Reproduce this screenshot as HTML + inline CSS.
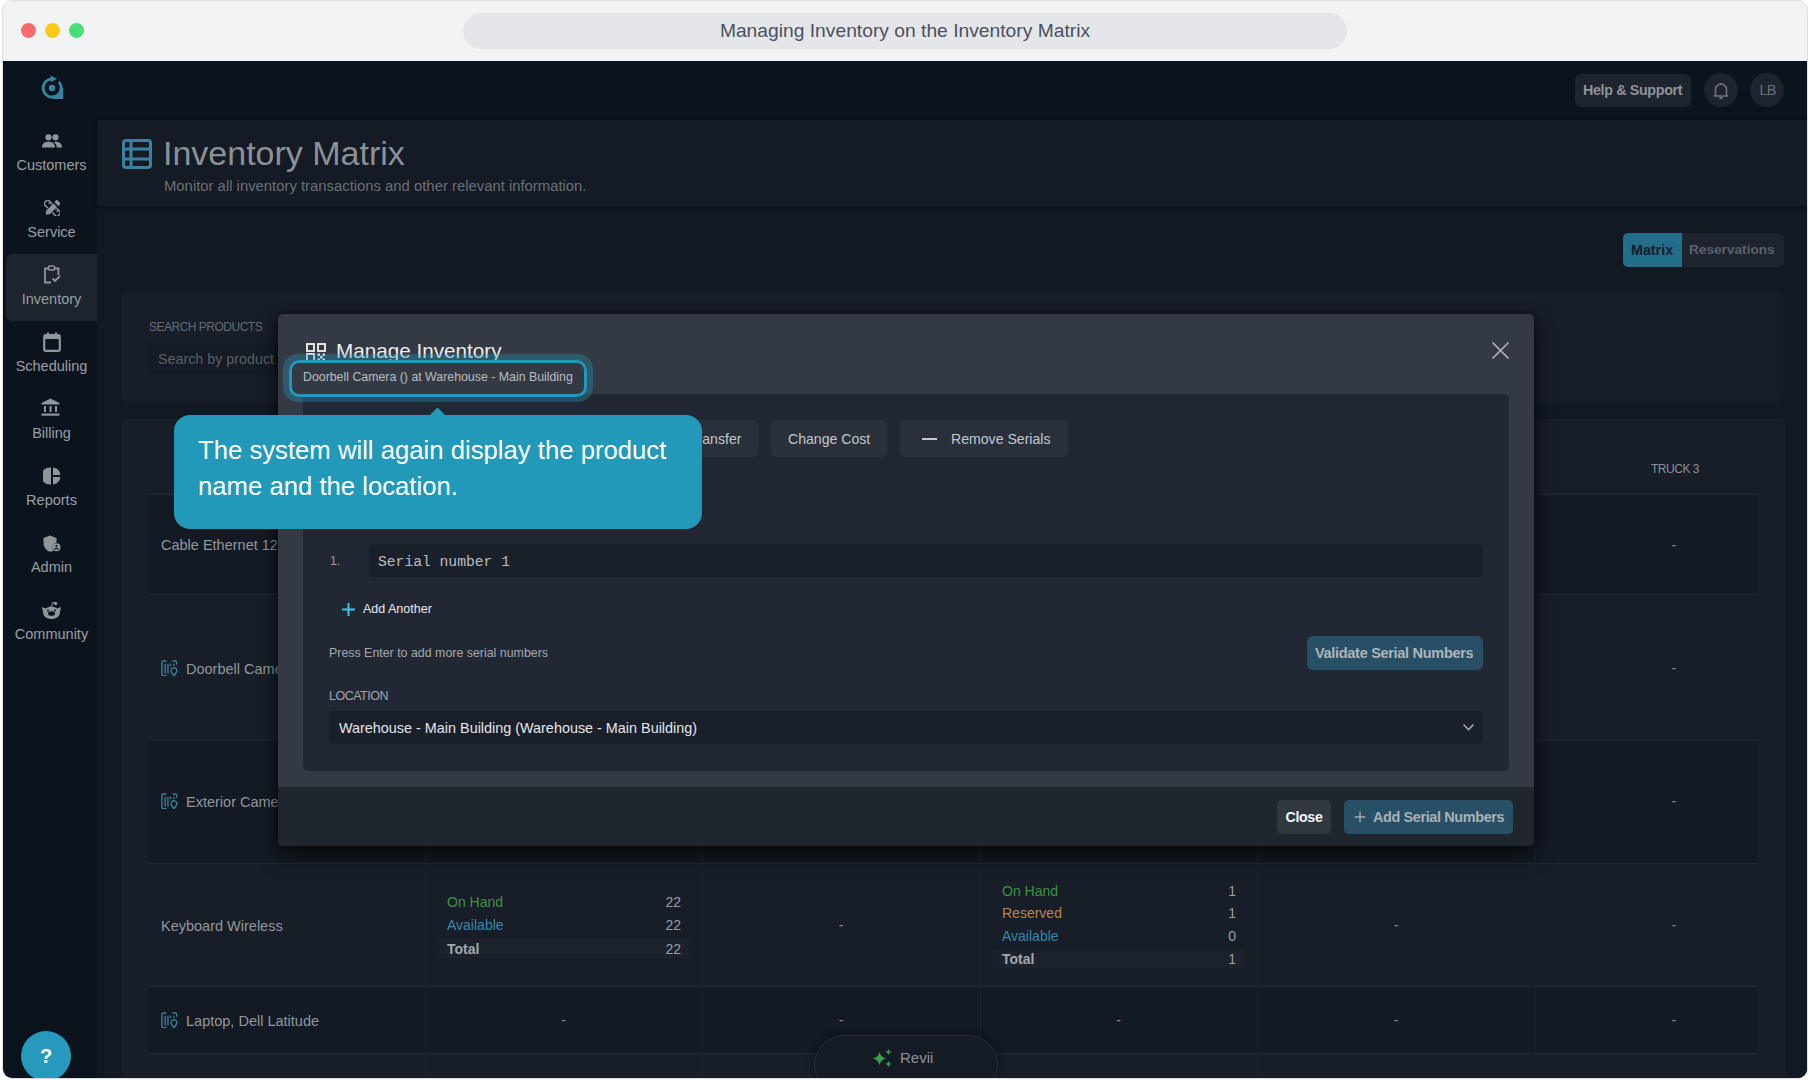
<!DOCTYPE html>
<html><head><meta charset="utf-8">
<style>
*{box-sizing:border-box;margin:0;padding:0}
html,body{width:1810px;height:1080px;overflow:hidden;background:#fff;font-family:"Liberation Sans",sans-serif}
.a{position:absolute}
.t{position:absolute;white-space:nowrap;line-height:1}
#frame{left:2px;top:0;width:1806px;height:1079px;border:1px solid #dcdfe3;border-radius:10px;background:#f2f3f5}
#dark{left:3px;top:61px;width:1804px;height:1017px;overflow:hidden;border-radius:0 0 9px 9px;background:#0b141d}
#pg{left:-3px;top:-61px;width:1810px;height:1080px}
.dot{width:15px;height:15px;border-radius:50%}
</style></head><body>
<div id="frame" class="a"></div>
<div class="a dot" style="left:21px;top:23px;background:#f76b6d"></div>
<div class="a dot" style="left:45px;top:23px;background:#fbc91a"></div>
<div class="a dot" style="left:69px;top:23px;background:#4ade7a"></div>
<div class="a" style="left:463px;top:13px;width:884px;height:36px;border-radius:18px;background:#e4e6ea"></div>
<div class="t" style="left:463px;width:884px;top:21px;text-align:center;font-size:19.25px;color:#4a525e">Managing Inventory on the Inventory Matrix</div>

<div id="dark" class="a"><div id="pg" class="a">
  <!-- main bg -->
  <div class="a" style="left:97px;top:120px;width:1713px;height:960px;background:#111922"></div>
  <!-- header card -->
  <div class="a" style="left:97px;top:120px;width:1713px;height:86px;background:#141b24;box-shadow:0 1px 5px rgba(0,0,0,.45)"></div>

  <!-- sidebar active -->
  <div class="a" style="left:6px;top:254px;width:91px;height:67px;background:#1d242e;border-radius:6px 0 0 6px"></div>


  <!-- logo -->
  <svg class="a" style="left:40px;top:74px" width="26" height="28" viewBox="0 0 26 28">
    <rect x="12.2" y="14" width="11" height="11" fill="#3a82a0"/>
    <circle cx="12.2" cy="14" r="7.6" fill="#0c141d"/>
    <circle cx="12.2" cy="14" r="9.1" fill="none" stroke="#3a82a0" stroke-width="2.9" stroke-dasharray="44.6 5.5 7.1 0"/>
    <path d="M10.5 1.6 L17 4.8 L10.8 8.2 Z" fill="#3a82a0"/>
    <circle cx="12" cy="14" r="3.3" fill="#3a82a0"/>
  </svg>
  <!-- customers -->
  <svg class="a" style="left:42px;top:134px" width="20" height="14" viewBox="0 0 20 14">
    <circle cx="6.5" cy="3.3" r="3.1" fill="#8f959b"/><circle cx="13.5" cy="3.3" r="3.1" fill="#8f959b"/>
    <path d="M0 13.5 C0 9 3 7.8 6.5 7.8 C10 7.8 13 9 13 13.5 Z" fill="#8f959b"/>
    <path d="M11.5 8.2 C12.2 8 12.8 7.8 13.5 7.8 C17 7.8 20 9 20 13.5 L14.8 13.5 C14.8 11 13.8 9.3 11.5 8.2 Z" fill="#8f959b"/>
  </svg>
  <!-- service -->
  <svg class="a" style="left:43.5px;top:199.5px" width="16.5" height="16.5" viewBox="0.3 0.3 17.4 17.4">
    <g transform="translate(9,9) rotate(45)">
      <rect x="-10" y="-3.1" width="20" height="6.2" rx="1.6" fill="none" stroke="#8f959b" stroke-width="1.6"/>
      <path d="M-6 -3 V-0.5 M-3 -3 V-1 M3 -3 V-1 M6 -3 V-0.5" stroke="#8f959b" stroke-width="1.2"/>
    </g>
    <g transform="translate(9,9) rotate(-45)">
      <path d="M-10.5 0 L-6.5 -3 H4.8 V3 H-6.5 Z" fill="#8f959b" stroke="#0b141d" stroke-width="0.8"/>
      <rect x="6.2" y="-3" width="3.6" height="6" fill="#8f959b"/>
    </g>
  </svg>
  <!-- inventory -->
  <svg class="a" style="left:43px;top:265px" width="18" height="19" viewBox="0 0 18 19">
    <path d="M5 3.5 L2 3.5 L2 17.5 L8 17.5" fill="none" stroke="#8f959b" stroke-width="1.8"/>
    <path d="M12 3.5 L15.5 3.5 L15.5 10" fill="none" stroke="#8f959b" stroke-width="1.8"/>
    <rect x="5.5" y="1" width="6" height="4" rx="1" fill="none" stroke="#8f959b" stroke-width="1.6"/>
    <path d="M9.5 13.5 L12 16 L17 11" fill="none" stroke="#8f959b" stroke-width="1.8"/>
  </svg>
  <!-- scheduling -->
  <svg class="a" style="left:43px;top:332px" width="18" height="20" viewBox="0 0 18 20">
    <rect x="1.2" y="3.2" width="15.6" height="15.6" rx="1.5" fill="none" stroke="#8f959b" stroke-width="2.2"/>
    <rect x="1" y="3" width="16" height="4" fill="#8f959b"/>
    <rect x="4" y="0.5" width="2" height="4" fill="#8f959b"/><rect x="12" y="0.5" width="2" height="4" fill="#8f959b"/>
  </svg>
  <!-- billing -->
  <svg class="a" style="left:41px;top:398px" width="19" height="19" viewBox="0 0 19 19">
    <path d="M9.5 0.5 L18.5 5 L18.5 6.5 L0.5 6.5 L0.5 5 Z" fill="#8f959b"/>
    <rect x="3" y="8" width="2" height="6" fill="#8f959b"/><rect x="8.5" y="8" width="2" height="6" fill="#8f959b"/><rect x="14" y="8" width="2" height="6" fill="#8f959b"/>
    <rect x="0.5" y="15.5" width="18" height="2.2" fill="#8f959b"/>
  </svg>
  <!-- reports -->
  <svg class="a" style="left:43px;top:467px" width="18" height="18" viewBox="0 0 18 18">
    <path d="M8 0.6 A8.5 8.5 0 1 0 8 17.4 Z" fill="#8f959b"/>
    <path d="M10 0.6 A8.5 8.5 0 0 1 17.4 8 L10 8 Z" fill="#8f959b"/>
    <path d="M10 10 L17.4 10 A8.5 8.5 0 0 1 10 17.4 Z" fill="#8f959b"/>
  </svg>
  <!-- admin -->
  <svg class="a" style="left:43px;top:535px" width="18" height="17" viewBox="0 0 18 17">
    <path d="M7 0.5 L13.5 3 L13.5 7.5 C11 8 9.5 10 9.5 12.5 C9.5 14 10 15 10.8 15.8 C9.8 16.3 8.5 16.6 7 16.8 C3 15.5 0.5 12 0.5 7.5 L0.5 3 Z" fill="#8f959b"/>
    <circle cx="13.5" cy="12.3" r="4" fill="#8f959b"/>
    <circle cx="13.5" cy="11" r="1.1" fill="#0c141d"/><path d="M11.5 14.5 C12 13 15 13 15.5 14.5" stroke="#0c141d" stroke-width="1.2" fill="none"/>
  </svg>
  <!-- community -->
  <svg class="a" style="left:41px;top:601px" width="21" height="19" viewBox="0 0 21 19">
    <path d="M1 6 L5 7.5 C7 6 9 5.5 10.5 5.5 C12 5.5 14 6 16 7.5 L20 6 L19 11 C19 15.5 15 18 10.5 18 C6 18 2 15.5 2 11 Z" fill="#8f959b"/>
    <circle cx="14.5" cy="2.5" r="1.8" fill="#8f959b"/><path d="M10.5 5.5 L11.5 1.5 L14.5 2.5" stroke="#8f959b" stroke-width="1" fill="none"/>
    <ellipse cx="10.5" cy="12.5" rx="3.5" ry="2.3" fill="#0c141d"/>
    <circle cx="7" cy="9.5" r="1" fill="#0c141d"/><circle cx="14" cy="9.5" r="1" fill="#0c141d"/>
  </svg>
  <div class="t" style="left:6px;width:91px;text-align:center;top:158.4px;font-size:14.5px;color:#9a9fa5">Customers</div>
  <div class="t" style="left:6px;width:91px;text-align:center;top:225.4px;font-size:14.5px;color:#9a9fa5">Service</div>
  <div class="t" style="left:6px;width:91px;text-align:center;top:292.4px;font-size:14.5px;color:#9a9fa5">Inventory</div>
  <div class="t" style="left:6px;width:91px;text-align:center;top:359.4px;font-size:14.5px;color:#9a9fa5">Scheduling</div>
  <div class="t" style="left:6px;width:91px;text-align:center;top:426.4px;font-size:14.5px;color:#9a9fa5">Billing</div>
  <div class="t" style="left:6px;width:91px;text-align:center;top:493.4px;font-size:14.5px;color:#9a9fa5">Reports</div>
  <div class="t" style="left:6px;width:91px;text-align:center;top:560.4px;font-size:14.5px;color:#9a9fa5">Admin</div>
  <div class="t" style="left:6px;width:91px;text-align:center;top:627.4px;font-size:14.5px;color:#9a9fa5">Community</div>

  <!-- top bar buttons -->
  <div class="a" style="left:1575px;top:74px;width:116px;height:33px;border-radius:6px;background:#1d242d"></div>
  <div class="t" style="left:1583px;top:82.9px;font-size:14.3px;letter-spacing:-0.35px;font-weight:bold;color:#8e9399">Help &amp; Support</div>
  <div class="a" style="left:1704px;top:73px;width:34px;height:34px;border-radius:50%;background:#1d242d"></div>
  <div class="a" style="left:1750px;top:73px;width:34px;height:34px;border-radius:50%;background:#1d242d"></div>
  <div class="t" style="left:1759.5px;top:82.5px;font-size:14.6px;letter-spacing:-0.9px;color:#6b7178">LB</div>

  <!-- header -->
  <div class="t" style="left:163px;top:136px;font-size:34px;color:#8b9197">Inventory Matrix</div>
  <div class="t" style="left:164px;top:179px;font-size:14.85px;color:#6a7077">Monitor all inventory transactions and other relevant information.</div>

  <!-- toggle -->
  <div class="a" style="left:1623px;top:233px;width:161px;height:34px;border-radius:5px;background:#1d242e;overflow:hidden">
    <div class="a" style="left:0;top:0;width:59px;height:34px;background:#226d89"></div>
  </div>
  <div class="t" style="left:1631px;top:243px;font-size:14.3px;font-weight:bold;color:#172029">Matrix</div>
  <div class="t" style="left:1689px;top:243px;font-size:13.65px;font-weight:bold;color:#5b6169">Reservations</div>

  <!-- search card -->
  <div class="a" style="left:122px;top:292px;width:1661px;height:110px;border-radius:6px;background:#171e28"></div>
  <div class="t" style="left:149px;top:321px;font-size:12px;letter-spacing:-0.5px;color:#656b72">SEARCH PRODUCTS</div>
  <div class="a" style="left:148px;top:342px;width:200px;height:33px;border-radius:4px;background:#141b24"></div>
  <div class="t" style="left:158px;top:352px;font-size:14.3px;color:#5a6067">Search by product</div>

  <!-- table card -->
  <div class="a" style="left:122px;top:419px;width:1664px;height:680px;border-radius:6px;background:#171e28"></div>
  <div class="a" style="left:148px;top:419px;width:1610px;height:700px;overflow:hidden">
    <div class="a" style="left:0;top:75px;width:1610px;height:100px;background:#131a23;border-top:1px solid #202832"></div>
    <div class="a" style="left:0;top:175px;width:1610px;height:146px;background:transparent;border-top:1px solid #202832"></div>
    <div class="a" style="left:0;top:321px;width:1610px;height:123px;background:#131a23;border-top:1px solid #202832"></div>
    <div class="a" style="left:0;top:444px;width:1610px;height:123px;background:transparent;border-top:1px solid #202832"></div>
    <div class="a" style="left:0;top:567px;width:1610px;height:67px;background:#131a23;border-top:1px solid #202832"></div>
    <div class="a" style="left:0;top:634px;width:1610px;height:67px;background:transparent;border-top:1px solid #202832"></div>
    <div class="a" style="left:277px;top:75px;width:1px;height:700px;background:#1c232c"></div>
    <div class="a" style="left:554px;top:75px;width:1px;height:700px;background:#1c232c"></div>
    <div class="a" style="left:832px;top:75px;width:1px;height:700px;background:#1c232c"></div>
    <div class="a" style="left:1109px;top:75px;width:1px;height:700px;background:#1c232c"></div>
    <div class="a" style="left:1387px;top:75px;width:1px;height:700px;background:#1c232c"></div>
  </div>
  <div class="t" style="left:161px;top:538.2px;font-size:14.5px;color:#92979d">Cable Ethernet 12ft</div>
  <svg class="a" style="left:160.5px;top:659.5px" width="17.6" height="16.7" viewBox="0 0 19 18"><g fill="none" stroke="#3c7f99" stroke-width="1.5" stroke-linecap="round"><path d="M5.5 1 L3 1 Q1 1 1 3 L1 15 Q1 17 3 17 L5.5 17"/><path d="M13 1 L15 1 Q17 1 17 3 L17 4.5"/><path d="M4.5 4.5 V14 M7.5 4.5 V14 M10.2 4.5 V6 M14 4.5 V6"/><path d="M14 17.2 L11.3 13 A3.1 3.1 0 1 1 16.7 13 Z"/></g></svg>
  <div class="t" style="left:186px;top:661.5px;font-size:14.5px;color:#92979d">Doorbell Camera</div>
  <svg class="a" style="left:160.5px;top:792.5px" width="17.6" height="16.7" viewBox="0 0 19 18"><g fill="none" stroke="#3c7f99" stroke-width="1.5" stroke-linecap="round"><path d="M5.5 1 L3 1 Q1 1 1 3 L1 15 Q1 17 3 17 L5.5 17"/><path d="M13 1 L15 1 Q17 1 17 3 L17 4.5"/><path d="M4.5 4.5 V14 M7.5 4.5 V14 M10.2 4.5 V6 M14 4.5 V6"/><path d="M14 17.2 L11.3 13 A3.1 3.1 0 1 1 16.7 13 Z"/></g></svg>
  <div class="t" style="left:186px;top:794.5px;font-size:14.5px;color:#92979d">Exterior Camera</div>
  <div class="t" style="left:161px;top:918.5px;font-size:14.5px;color:#92979d">Keyboard Wireless</div>
  <svg class="a" style="left:160.5px;top:1011.5px" width="17.6" height="16.7" viewBox="0 0 19 18"><g fill="none" stroke="#3c7f99" stroke-width="1.5" stroke-linecap="round"><path d="M5.5 1 L3 1 Q1 1 1 3 L1 15 Q1 17 3 17 L5.5 17"/><path d="M13 1 L15 1 Q17 1 17 3 L17 4.5"/><path d="M4.5 4.5 V14 M7.5 4.5 V14 M10.2 4.5 V6 M14 4.5 V6"/><path d="M14 17.2 L11.3 13 A3.1 3.1 0 1 1 16.7 13 Z"/></g></svg>
  <div class="t" style="left:186px;top:1013.5px;font-size:14.5px;color:#92979d">Laptop, Dell Latitude</div>
  <div class="t" style="left:1654px;width:40px;text-align:center;top:538.1px;font-size:14px;color:#8a9096">-</div>
  <div class="t" style="left:1654px;width:40px;text-align:center;top:661.1px;font-size:14px;color:#8a9096">-</div>
  <div class="t" style="left:1654px;width:40px;text-align:center;top:794.1px;font-size:14px;color:#8a9096">-</div>
  <div class="t" style="left:821px;width:40px;text-align:center;top:918.1px;font-size:14px;color:#8a9096">-</div>
  <div class="t" style="left:1376px;width:40px;text-align:center;top:918.1px;font-size:14px;color:#8a9096">-</div>
  <div class="t" style="left:1654px;width:40px;text-align:center;top:918.1px;font-size:14px;color:#8a9096">-</div>
  <div class="t" style="left:543.5px;width:40px;text-align:center;top:1013.1px;font-size:14px;color:#8a9096">-</div>
  <div class="t" style="left:821px;width:40px;text-align:center;top:1013.1px;font-size:14px;color:#8a9096">-</div>
  <div class="t" style="left:1098.5px;width:40px;text-align:center;top:1013.1px;font-size:14px;color:#8a9096">-</div>
  <div class="t" style="left:1376px;width:40px;text-align:center;top:1013.1px;font-size:14px;color:#8a9096">-</div>
  <div class="t" style="left:1654px;width:40px;text-align:center;top:1013.1px;font-size:14px;color:#8a9096">-</div>
  <div class="t" style="left:1600px;width:150px;text-align:center;top:462.8px;font-size:12px;letter-spacing:-0.45px;color:#8a9096">TRUCK 3</div>
  <div class="a" style="left:439px;top:939px;width:250px;height:19px;background:#1b222b"></div>
  <div class="t" style="left:447px;top:895.1px;font-size:14px;color:#3d9443">On Hand</div>
  <div class="t" style="left:621px;width:60px;text-align:right;top:895.1px;font-size:14px;color:#9a9fa5">22</div>
  <div class="t" style="left:447px;top:917.6px;font-size:14px;color:#3787ad">Available</div>
  <div class="t" style="left:621px;width:60px;text-align:right;top:917.6px;font-size:14px;color:#9a9fa5">22</div>
  <div class="t" style="left:447px;top:941.5px;font-size:14px;font-weight:bold;color:#a3a8ad">Total</div>
  <div class="t" style="left:621px;width:60px;text-align:right;top:941.5px;font-size:14px;color:#9a9fa5">22</div>
  <div class="a" style="left:993px;top:950px;width:251px;height:18px;background:#1b222b"></div>
  <div class="t" style="left:1002px;top:883.9px;font-size:14px;color:#3d9443">On Hand</div>
  <div class="t" style="left:1176px;width:60px;text-align:right;top:883.9px;font-size:14px;color:#9a9fa5">1</div>
  <div class="t" style="left:1002px;top:906.1px;font-size:14px;color:#b98550">Reserved</div>
  <div class="t" style="left:1176px;width:60px;text-align:right;top:906.1px;font-size:14px;color:#9a9fa5">1</div>
  <div class="t" style="left:1002px;top:928.9px;font-size:14px;color:#3787ad">Available</div>
  <div class="t" style="left:1176px;width:60px;text-align:right;top:928.9px;font-size:14px;color:#9a9fa5">0</div>
  <div class="t" style="left:1002px;top:952.4px;font-size:14px;font-weight:bold;color:#a3a8ad">Total</div>
  <div class="t" style="left:1176px;width:60px;text-align:right;top:952.4px;font-size:14px;color:#9a9fa5">1</div>

  <!-- header icons -->
  <svg class="a" style="left:121px;top:138px" width="32" height="32" viewBox="0 0 32 32">
    <rect x="2.5" y="2.5" width="27" height="27" rx="2.5" fill="none" stroke="#3a82a0" stroke-width="3"/>
    <path d="M10 3 V29 M3 11 H29 M3 21 H29" stroke="#3a82a0" stroke-width="3"/>
  </svg>
  <svg class="a" style="left:1712px;top:81px" width="18" height="19" viewBox="0 0 18 19">
    <path d="M3.5 14 V8.5 A5.5 5.5 0 0 1 14.5 8.5 V14 L15.5 15 H2.5 Z" fill="none" stroke="#6e747a" stroke-width="1.6" stroke-linejoin="round"/>
    <path d="M7.5 17 H10.5" stroke="#6e747a" stroke-width="1.8"/><circle cx="9" cy="2.8" r="1" fill="#6e747a"/>
  </svg>

  <!-- help circle -->
  <div class="a" style="left:21px;top:1031px;width:50px;height:50px;border-radius:50%;background:#2699bd"></div>
  <div class="t" style="left:21px;width:50px;text-align:center;top:1046px;font-size:20px;font-weight:bold;color:#fff">?</div>

  <!-- Revii pill -->
  <div class="a" style="left:814px;top:1035px;width:184px;height:60px;border-radius:30px;background:#141b24;border:1.5px solid #272e37;box-shadow:0 0 8px rgba(0,0,0,.45)"></div>
  <svg class="a" style="left:870px;top:1048px" width="24" height="22" viewBox="0 0 24 22">
    <path d="M9.5 3.8 Q10.6 9.4 16.2 10.5 Q10.6 11.6 9.5 17.2 Q8.4 11.6 2.8 10.5 Q8.4 9.4 9.5 3.8 Z" fill="#3a9e48"/>
    <path d="M18.5 1 Q19 3.5 21.5 4 Q19 4.5 18.5 7 Q18 4.5 15.5 4 Q18 3.5 18.5 1 Z" fill="#3a9e48"/>
    <path d="M18.5 13 Q19 15.5 21.5 16 Q19 16.5 18.5 19 Q18 16.5 15.5 16 Q18 15.5 18.5 13 Z" fill="#3a9e48"/>
  </svg>
  <div class="t" style="left:900px;top:1050px;font-size:15px;color:#8e9399">Revii</div>

  <!-- modal -->
  <div class="a" style="left:278px;top:314px;width:1256px;height:532px;border-radius:5px;background:#343a44;box-shadow:0 0 10px rgba(0,0,0,.55), 0 10px 20px rgba(0,0,0,.5);overflow:hidden">
    <div class="a" style="left:0;top:473px;width:1256px;height:59px;background:#20262e"></div>
  </div>
  <svg class="a" style="left:305.5px;top:342.5px" width="21" height="19" viewBox="0 0 21 19">
    <g fill="none" stroke="#f3f4f5" stroke-width="1.8">
      <rect x="1" y="1" width="7" height="7"/><rect x="12" y="1" width="7" height="7"/><rect x="1" y="11" width="7" height="7"/>
    </g>
    <rect x="11.5" y="10.5" width="2.5" height="2.5" fill="#f3f4f5"/><rect x="16.5" y="10.5" width="2.5" height="2.5" fill="#f3f4f5"/>
    <rect x="14" y="13" width="2.5" height="2.5" fill="#f3f4f5"/><rect x="11.5" y="15.5" width="2.5" height="2.5" fill="#f3f4f5"/><rect x="16.5" y="15.5" width="2.5" height="2.5" fill="#f3f4f5"/>
  </svg>
  <div class="t" style="left:336px;top:340.5px;font-size:20.7px;color:#eceef0">Manage Inventory</div>
  <svg class="a" style="left:1491px;top:341px" width="19" height="19" viewBox="0 0 19 19">
    <path d="M1.5 1.5 L17.5 17.5 M17.5 1.5 L1.5 17.5" stroke="#aeb2b7" stroke-width="1.7"/>
  </svg>
  <!-- body -->
  <div class="a" style="left:303px;top:394px;width:1206px;height:377px;border-radius:5px;background:#222833"></div>
  <div class="a" style="left:640px;top:420px;width:118px;height:37px;border-radius:5px;background:#29303a"></div>
  <div class="t" style="left:689.5px;top:432.2px;font-size:14.1px;color:#c3c7cc">Transfer</div>
  <div class="a" style="left:771px;top:420px;width:116px;height:37px;border-radius:5px;background:#29303a"></div>
  <div class="t" style="left:788px;top:432.2px;font-size:14.1px;color:#c3c7cc">Change Cost</div>
  <div class="a" style="left:900px;top:420px;width:168px;height:37px;border-radius:5px;background:#29303a"></div>
  <div class="a" style="left:922px;top:437.5px;width:15px;height:2px;background:#c3c7cc"></div>
  <div class="t" style="left:951px;top:432.2px;font-size:14.1px;color:#c3c7cc">Remove Serials</div>

  <div class="t" style="left:330px;top:555px;font-size:12px;color:#9ca1a7">1.</div>
  <div class="a" style="left:369px;top:544px;width:1114px;height:33px;border-radius:4px;background:#1a2029"></div>
  <div class="t" style="left:378px;top:555px;font-family:'Liberation Mono',monospace;font-size:14.67px;color:#b9bdc2">Serial number 1</div>
  <svg class="a" style="left:340.5px;top:601.5px" width="15" height="15" viewBox="0 0 15 15">
    <path d="M7.5 1 V14 M1 7.5 H14" stroke="#45bde3" stroke-width="2"/>
  </svg>
  <div class="t" style="left:363px;top:602.6px;font-size:12.5px;color:#e6e8ea">Add Another</div>
  <div class="t" style="left:329px;top:646.6px;font-size:12.4px;color:#a4a9ae">Press Enter to add more serial numbers</div>
  <div class="a" style="left:1307px;top:636px;width:176px;height:34px;border-radius:6px;background:#275067"></div>
  <div class="t" style="left:1315px;top:645.6px;font-size:14.5px;letter-spacing:-0.3px;font-weight:bold;color:#adb5bb">Validate Serial Numbers</div>
  <div class="t" style="left:329px;top:689.5px;font-size:12.5px;letter-spacing:-0.5px;color:#a0a5ab">LOCATION</div>
  <div class="a" style="left:329px;top:711px;width:1154px;height:33px;border-radius:4px;background:#1a2029"></div>
  <div class="t" style="left:339px;top:721.4px;font-size:14.4px;color:#e3e6e9">Warehouse - Main Building (Warehouse - Main Building)</div>
  <svg class="a" style="left:1462px;top:723px" width="13" height="9" viewBox="0 0 13 9">
    <path d="M1.5 1.5 L6.5 6.5 L11.5 1.5" fill="none" stroke="#a0a5ab" stroke-width="1.6"/>
  </svg>
  <!-- footer -->
  <div class="a" style="left:1277px;top:800px;width:54px;height:34px;border-radius:5px;background:#30373f"></div>
  <div class="t" style="left:1277px;width:54px;text-align:center;top:809.7px;font-size:14.2px;letter-spacing:-0.35px;font-weight:bold;color:#f3f4f6">Close</div>
  <div class="a" style="left:1344px;top:800px;width:169px;height:34px;border-radius:5px;background:#275067"></div>
  <svg class="a" style="left:1354px;top:811px" width="12" height="12" viewBox="0 0 12 12">
    <path d="M6 0.5 V11.5 M0.5 6 H11.5" stroke="#9fa9b1" stroke-width="1.4"/>
  </svg>
  <div class="t" style="left:1373px;top:809.7px;font-size:14.4px;letter-spacing:-0.35px;font-weight:bold;color:#a9b1b7">Add Serial Numbers</div>

  <!-- highlight -->
  <div class="a" style="left:283px;top:354px;width:310px;height:48px;border-radius:15px;border:6px solid rgba(36,151,188,.35)"></div>
  <div class="a" style="left:289px;top:360px;width:298px;height:37px;border-radius:10px;border:3px solid #2497bc"></div>
  <div class="t" style="left:303px;top:371px;font-size:12.35px;color:#b8bcc1">Doorbell Camera () at Warehouse - Main Building</div>

  <!-- tooltip -->
  <div class="a" style="left:174px;top:415px;width:528px;height:114px;border-radius:16px;background:#2399b9"></div>
  <svg class="a" style="left:429px;top:407px" width="17" height="9" viewBox="0 0 17 9"><path d="M0 9 L8.5 0.5 L17 9 Z" fill="#2399b9"/></svg>
  <div class="a" style="left:198px;top:432.1px;font-size:25.7px;line-height:36px;color:#fff;white-space:nowrap">The system will again display the product<br>name and the location.</div>

</div></div>
</body></html>
